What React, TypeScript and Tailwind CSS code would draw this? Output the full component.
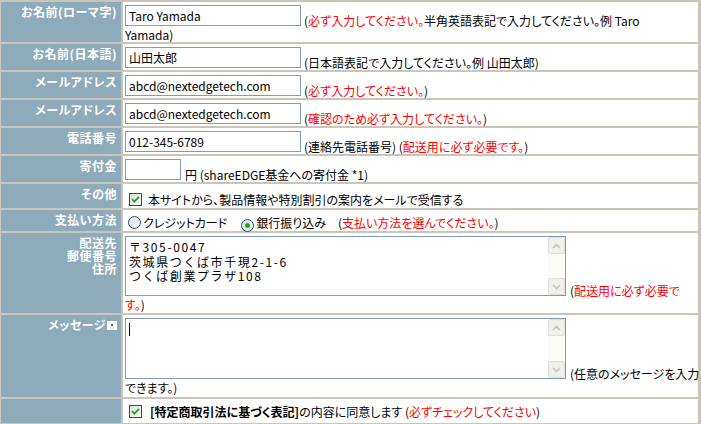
import React from "react";

const FONT = "[font-family:'Noto_Sans_CJK_JP','Noto_Sans',sans-serif]";

function Red({ children }: { children: React.ReactNode }) {
  return <span className="text-[#ff0000]">{children}</span>;
}

function TextBox({ w, value }: { w: string; value: string }) {
  return (
    <span
      className={`inline-block ${w} h-[21px] border border-[#7f9db9] bg-white pl-[3px] text-[12px] leading-[19px] align-baseline text-black whitespace-nowrap overflow-hidden`}
    >
      {value || "\u00a0"}
    </span>
  );
}

function XPCheck() {
  return (
    <span className="inline-flex shrink-0 w-[13px] h-[13px] border border-[#1c5180] bg-gradient-to-br from-[#dcdcd7] to-white items-center justify-center">
      <svg width="9" height="9" viewBox="0 0 9 9">
        <path d="M1 4.2 L3.4 6.6 L8 1.8" stroke="#21a121" strokeWidth="1.8" fill="none" />
      </svg>
    </span>
  );
}

function XPRadio({ checked }: { checked?: boolean }) {
  return (
    <span className="inline-flex shrink-0 w-[13px] h-[13px] rounded-full border border-[#1c5180] bg-gradient-to-br from-[#dcdcd7] to-white items-center justify-center">
      {checked && <span className="w-[5px] h-[5px] rounded-full bg-[#21a121]" />}
    </span>
  );
}

function Arrow({ up }: { up?: boolean }) {
  return (
    <svg width="9" height="6" viewBox="0 0 9 6">
      <path
        d={up ? "M1 5 L4.5 1.5 L8 5" : "M1 1 L4.5 4.5 L8 1"}
        stroke="#c3c3b6"
        strokeWidth="1.6"
        fill="none"
      />
    </svg>
  );
}

function ScrollBar() {
  return (
    <div className="w-[17px] flex flex-col bg-[#fbfbf7]">
      <div className="h-[17px] rounded-[2px] border border-[#e0dfd6] bg-[#f1f0ea] flex items-center justify-center">
        <Arrow up />
      </div>
      <div className="flex-1" />
      <div className="h-[17px] rounded-[2px] border border-[#e0dfd6] bg-[#f1f0ea] flex items-center justify-center">
        <Arrow />
      </div>
    </div>
  );
}

function Area({ h, children }: { h: string; children?: React.ReactNode }) {
  return (
    <span className={`inline-block w-[441px] ${h} border border-[#7f9db9] bg-white overflow-hidden align-baseline`}>
      <span className="flex h-full">
        <span className="flex-1 pl-[3px] pt-[3px] text-[12px] leading-[14.5px] tracking-[1.6px] text-black [font-feature-settings:normal]">
          {children}
        </span>
        <ScrollBar />
      </span>
    </span>
  );
}

function Label({ children, lh = "leading-[14px]" }: { children?: React.ReactNode; lh?: string }) {
  return (
    <div className={`bg-[#8eabbc] text-white font-bold text-[12px] ${lh} tracking-[0.5px] text-right pr-[4px] pt-[3px]`}>
      {children}
    </div>
  );
}

export default function App() {
  return (
    <div
      className={`w-[701px] h-[424px] bg-[#c9c5b8] pt-[2px] pl-[1px] pr-[3px] ${FONT} [font-feature-settings:'palt'] text-black`}
    >
      <div className="grid grid-cols-[120px_575px] gap-[2px] grid-rows-[40px_26px_26px_26px_26px_26px_24px_21px_80px_82px_24px]">
        <Label>お名前(ローマ字)</Label>
        <div className="bg-white text-[12px] leading-[14px] pl-[2px] pr-[2px] pt-[3px]">
          <div className="whitespace-nowrap">
            <TextBox w="w-[176px]" value="Taro Yamada" />
            <span className="ml-[3px]">(</span>
            <Red>必ず入力してください。</Red>半角英語表記で入力してください。例 Taro
          </div>
          <div>Yamada)</div>
        </div>

        <Label>お名前(日本語)</Label>
        <div className="bg-white text-[12px] leading-[14px] pl-[2px] pt-[3px] whitespace-nowrap">
          <TextBox w="w-[176px]" value="山田太郎" />
          <span className="ml-[3px]">(日本語表記で入力してください。例 山田太郎)</span>
        </div>

        <Label>メールアドレス</Label>
        <div className="bg-white text-[12px] leading-[14px] pl-[2px] pt-[3px] whitespace-nowrap">
          <TextBox w="w-[176px]" value="abcd@nextedgetech.com" />
          <span className="ml-[3px]">(</span>
          <Red>必ず入力してください。</Red>)
        </div>

        <Label>メールアドレス</Label>
        <div className="bg-white text-[12px] leading-[14px] pl-[2px] pt-[3px] whitespace-nowrap">
          <TextBox w="w-[176px]" value="abcd@nextedgetech.com" />
          <span className="ml-[3px]">(</span>
          <Red>確認のため必ず入力してください。</Red>)
        </div>

        <Label>電話番号</Label>
        <div className="bg-white text-[12px] leading-[14px] pl-[2px] pt-[3px] whitespace-nowrap">
          <TextBox w="w-[176px]" value="012-345-6789" />
          <span className="ml-[3px]">(連絡先電話番号) (</span>
          <Red>配送用に必ず必要です。</Red>)
        </div>

        <Label>寄付金</Label>
        <div className="bg-white text-[12px] leading-[14px] pl-[2px] pt-[3px] whitespace-nowrap">
          <TextBox w="w-[56px]" value="" />
          <span className="ml-[4px]">円 (shareEDGE基金への寄付金 *1)</span>
        </div>

        <Label>その他</Label>
        <div className="bg-white text-[12px] leading-[13px] pl-[6px] pt-[9px] flex items-start whitespace-nowrap">
          <XPCheck />
          <span className="ml-[6px]">本サイトから、製品情報や特別割引の案内をメールで受信する</span>
        </div>

        <Label>支払い方法</Label>
        <div className="bg-white text-[12px] leading-[13px] pl-[5px] pt-[6px] flex items-start whitespace-nowrap">
          <XPRadio />
          <span className="ml-[2px]">クレジットカード</span>
          <span className="ml-[14px]">
            <XPRadio checked />
          </span>
          <span className="ml-[2px]">銀行振り込み</span>
          <span className="ml-[12px]">
            (<Red>支払い方法を選んでください。</Red>)
          </span>
        </div>

        <Label lh="leading-[13px]">
          配送先
          <br />
          郵便番号
          <br />
          住所
        </Label>
        <div className="bg-white text-[12px] leading-[14px] pl-[2px] pt-[3px]">
          <div className="whitespace-nowrap">
            <Area h="h-[60px]">
              〒305-0047
              <br />
              茨城県つくば市千現2-1-6
              <br />
              つくば創業プラザ108
            </Area>
            <span className="ml-[4px]">(</span>
            <Red>配送用に必ず必要で</Red>
          </div>
          <div>
            <Red>す。</Red>)
          </div>
        </div>

        <Label>
          <span className="inline-flex items-center">
            メッセージ
            <span className="inline-flex w-[10px] h-[9px] bg-white ml-[1px] items-center justify-center">
              <span className="w-[2px] h-[2px] bg-[#3a5a8c]" />
            </span>
          </span>
        </Label>
        <div className="bg-white text-[12px] leading-[14px] pl-[2px] pt-[3px]">
          <div className="whitespace-nowrap">
            <Area h="h-[61px]">
              <span className="inline-block w-[1px] h-[13px] bg-black mt-[1px]" />
            </Area>
            <span className="ml-[4px]">(任意のメッセージを入力</span>
          </div>
          <div>できます。)</div>
        </div>

        <Label />
        <div className="bg-white text-[12px] leading-[13px] pl-[6px] pt-[6px] flex items-start whitespace-nowrap">
          <XPCheck />
          <span className="ml-[8px] font-bold">[特定商取引法に基づく表記]</span>
          <span>の内容に同意します (</span>
          <Red>必ずチェックしてください</Red>
          <span>)</span>
        </div>
      </div>
    </div>
  );
}
